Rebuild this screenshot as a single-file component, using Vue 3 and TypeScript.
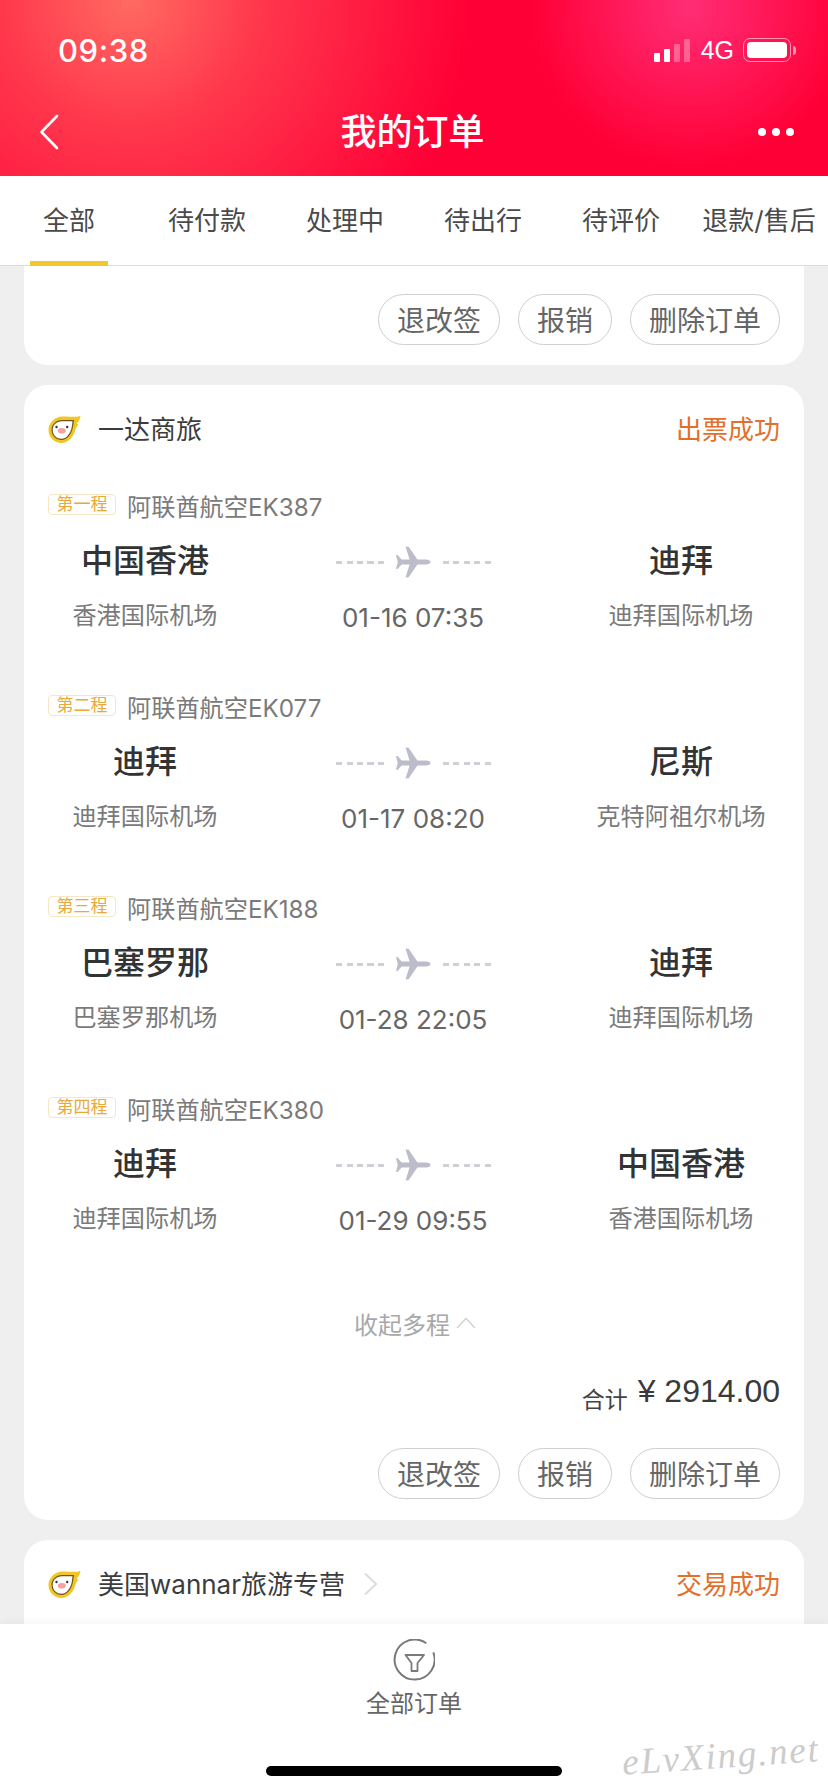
<script setup lang="ts">
interface Leg { tag: string; flight: string; from: string; fromPort: string; to: string; toPort: string; time: string }
const tabs: string[] = ['全部', '待付款', '处理中', '待出行', '待评价', '退款/售后']
const actions: string[] = ['退改签', '报销', '删除订单']
const legs: Leg[] = [
  { tag: '第一程', flight: '阿联酋航空EK387', from: '中国香港', fromPort: '香港国际机场', to: '迪拜', toPort: '迪拜国际机场', time: '01-16 07:35' },
  { tag: '第二程', flight: '阿联酋航空EK077', from: '迪拜', fromPort: '迪拜国际机场', to: '尼斯', toPort: '克特阿祖尔机场', time: '01-17 08:20' },
  { tag: '第三程', flight: '阿联酋航空EK188', from: '巴塞罗那', fromPort: '巴塞罗那机场', to: '迪拜', toPort: '迪拜国际机场', time: '01-28 22:05' },
  { tag: '第四程', flight: '阿联酋航空EK380', from: '迪拜', fromPort: '迪拜国际机场', to: '中国香港', toPort: '香港国际机场', time: '01-29 09:55' },
]
</script>

<template>
  <div class="app">
    <header class="hero">
      <div class="status">
        <span class="clock">09:38</span>
        <div class="status-right">
          <div class="signal"><i class="b1"></i><i class="b2"></i><i class="b3"></i><i class="b4"></i></div>
          <span class="net">4G</span>
          <div class="battery"><div class="battery-fill"></div></div>
          <div class="battery-nub"></div>
        </div>
      </div>
      <div class="nav">
        <svg class="back" width="20" height="36" viewBox="0 0 20 36"><path d="M18 2 2.500 18 18 34" fill="none" stroke="#fff" stroke-width="2.600" stroke-linecap="round" stroke-linejoin="round"/></svg>
        <h1 class="title">我的订单</h1>
        <div class="more"><i></i><i></i><i></i></div>
      </div>
    </header>

    <nav class="tabs">
      <div v-for="(t, i) in tabs" :key="t" class="tab" :class="{ active: i === 0 }">{{ t }}</div>
    </nav>

    <main class="list">
      <section class="card stub">
        <div class="actions">
          <button v-for="a in actions" :key="a" class="btn">{{ a }}</button>
        </div>
      </section>

      <section class="card">
        <div class="card-head">
          <svg class="logo" width="33" height="28" viewBox="0 0 32 28">
            <path d="M32 1C27 2.500 22 1.500 14 1.500 6 1.500 0 8 0 15c0 7.500 6 13 13 13 7 0 12.500-7 14-13.500.5-2 2-4 3-5L28 9c2-2 3.500-5 4-8Z" fill="#f2c522"/>
            <path d="M25.500 5H13.500C7.500 5 3 9.500 3 15c0 5.500 4.500 10 10 10 5.500 0 9.500-5.500 11-11 .8-3 1-6 1.500-9Z" fill="#6a5420"/>
            <path d="M24 6.200H13.500C8 6.200 4.200 10 4.200 15c0 5 3.800 8.800 8.800 8.800 5 0 8.600-5.300 9.900-10.100.6-2.700.9-5.200 1.100-7.500Z" fill="#fff"/>
            <ellipse cx="13.300" cy="15.700" rx="4" ry="2.800" fill="#f2a2a2"/>
            <circle cx="8" cy="12" r="1.200" fill="#333"/><circle cx="18.700" cy="12" r="1.200" fill="#333"/>
          </svg>
          <span class="shop">一达商旅</span>
          <span class="state">出票成功</span>
        </div>

        <div v-for="leg in legs" :key="leg.tag" class="leg">
          <div class="leg-top">
            <span class="tag">{{ leg.tag }}</span>
            <span class="flight">{{ leg.flight }}</span>
          </div>
          <div class="route">
            <div class="place">
              <div class="city">{{ leg.from }}</div>
              <div class="port">{{ leg.fromPort }}</div>
            </div>
            <div class="mid">
              <div class="track">
                <span class="dash"></span>
                <svg width="35" height="32" viewBox="0 0 36 32"><path d="M35.500 16c0-1.600-2-2.600-5-2.600h-8.500L13 .3 9.800 0l4.200 13.400H5.800L1.600 8.800 0 9l1.800 7L0 23l1.600.2 4.200-4.600H14L9.800 32l3.200-.3 9-13.100h8.500c3 0 5-1 5-2.600Z" fill="#bcbcca"/></svg>
                <span class="dash"></span>
              </div>
              <div class="time">{{ leg.time }}</div>
            </div>
            <div class="place">
              <div class="city">{{ leg.to }}</div>
              <div class="port">{{ leg.toPort }}</div>
            </div>
          </div>
        </div>

        <div class="collapse">
          <span>收起多程</span>
          <svg width="20" height="12" viewBox="0 0 20 12"><path d="M1 11 10 1.500 19 11" fill="none" stroke="#d4d4d4" stroke-width="1.600"/></svg>
        </div>
        <div class="total">
          <span class="total-label">合计</span>
          <span class="total-price">¥ 2914.00</span>
        </div>
        <div class="actions spaced">
          <button v-for="a in actions" :key="a" class="btn">{{ a }}</button>
        </div>
      </section>

      <section class="card tail">
        <div class="card-head">
          <svg class="logo" width="33" height="28" viewBox="0 0 32 28">
            <path d="M32 1C27 2.500 22 1.500 14 1.500 6 1.500 0 8 0 15c0 7.500 6 13 13 13 7 0 12.500-7 14-13.500.5-2 2-4 3-5L28 9c2-2 3.500-5 4-8Z" fill="#f2c522"/>
            <path d="M25.500 5H13.500C7.500 5 3 9.500 3 15c0 5.500 4.500 10 10 10 5.500 0 9.500-5.500 11-11 .8-3 1-6 1.500-9Z" fill="#6a5420"/>
            <path d="M24 6.200H13.500C8 6.200 4.200 10 4.200 15c0 5 3.800 8.800 8.800 8.800 5 0 8.600-5.300 9.900-10.100.6-2.700.9-5.200 1.100-7.500Z" fill="#fff"/>
            <ellipse cx="13.300" cy="15.700" rx="4" ry="2.800" fill="#f2a2a2"/>
            <circle cx="8" cy="12" r="1.200" fill="#333"/><circle cx="18.700" cy="12" r="1.200" fill="#333"/>
          </svg>
          <span class="shop">美国wannar旅游专营</span>
          <svg class="chev" width="15" height="24" viewBox="0 0 15 24"><path d="M2 1.500 13 12 2 22.500" fill="none" stroke="#dcdcdc" stroke-width="2"/></svg>
          <span class="state">交易成功</span>
        </div>
      </section>
    </main>

    <footer class="bottom">
      <svg width="42" height="42" viewBox="0 0 42 42">
        <path d="M33.300 4.300A20 20 0 1 0 40.300 13.300" fill="none" stroke="#7a7a7a" stroke-width="2"/>
        <path d="M12.500 16H31L24.500 24v8h-6v-8Z" fill="none" stroke="#7a7a7a" stroke-width="1.800" stroke-linejoin="round"/>
      </svg>
      <div class="bottom-label">全部订单</div>
      <div class="home"></div>
      <div class="watermark">eLvXing.net</div>
    </footer>
  </div>
</template>

<style scoped>
.app {
  width: 828px;
  height: 1792px;
  display: flex;
  flex-direction: column;
  overflow: hidden;
  background: #efefef;
  font-family: Inter, "Noto Sans CJK SC", sans-serif;
  color: #333;
}
.hero {
  height: 176px;
  flex: none;
  color: #fff;
  background:
    radial-gradient(circle at 130px 0, rgba(255, 125, 105, .85) 0, rgba(255, 100, 95, .55) 130px, rgba(255, 0, 54, 0) 340px),
    radial-gradient(circle at 690px 8px, rgba(255, 50, 125, .9) 0, rgba(255, 0, 54, 0) 160px),
    #ff0036;
}
.status {
  height: 100px;
  display: flex;
  align-items: center;
  justify-content: space-between;
  padding: 0 32px 0 58px;
}
.clock { font: 500 31px/1 Inter, sans-serif; letter-spacing: .6px; }
.status-right { display: flex; align-items: center; }
.signal { display: flex; align-items: flex-end; gap: 4px; height: 23px; margin-right: 11px; }
.signal i { width: 6px; border-radius: 1px; background: #fff; display: block; }
.signal .b1 { height: 9px; }
.signal .b2 { height: 13px; }
.signal .b3 { height: 18px; background: rgba(255, 255, 255, .3); }
.signal .b4 { height: 23px; background: rgba(255, 255, 255, .3); }
.net { font: 400 25px/1 "Liberation Sans", sans-serif; margin-right: 9px; }
.battery {
  width: 48px;
  height: 24px;
  box-sizing: border-box;
  padding: 3px;
  border: 1.500px solid rgba(255, 255, 255, .55);
  border-radius: 7px;
}
.battery-fill { height: 100%; background: #fff; border-radius: 4px; }
.battery-nub { width: 3px; height: 9px; margin-left: 2px; background: rgba(255, 255, 255, .55); border-radius: 0 3px 3px 0; }
.nav {
  height: 64px;
  display: flex;
  align-items: center;
  justify-content: space-between;
  padding: 0 34px 0 39px;
  position: relative;
}
.title {
  margin: 0;
  flex: 1;
  text-align: center;
  font-size: 36px;
  font-weight: 500;
  line-height: 64px;
  padding-left: 8px;
}
.more { display: flex; gap: 6px; }
.more i { width: 8px; height: 8px; border-radius: 50%; background: #fff; display: block; }

.tabs {
  height: 90px;
  flex: none;
  box-sizing: border-box;
  display: grid;
  grid-template-columns: repeat(6, 138px);
  background: #fff;
  border-bottom: 1px solid #dcdcdc;
}
.tab {
  position: relative;
  text-align: center;
  font-size: 26px;
  line-height: 90px;
  color: #4a4a4a;
  white-space: nowrap;
}
.tab.active::after {
  content: "";
  position: absolute;
  left: 30px;
  width: 78px;
  bottom: 0;
  height: 5px;
  background: #f2c82c;
}

.list {
  flex: 1;
  min-height: 0;
  overflow: hidden;
  padding: 0 24px;
  display: flex;
  flex-direction: column;
  gap: 20px;
}
.card {
  flex: none;
  background: #fff;
  border-radius: 24px;
  padding: 0 24px;
}
.card.stub {
  border-radius: 0 0 24px 24px;
  padding-top: 28px;
  padding-bottom: 20px;
}
.card.tail { padding-bottom: 120px; }
.actions { display: flex; justify-content: flex-end; gap: 18px; }
.actions.spaced { margin-top: 31px; padding-bottom: 21px; }
.btn {
  height: 51px;
  padding: 3px 18px 0;
  border: 1px solid #cfcfcf;
  border-radius: 26px;
  background: #fff;
  color: #666;
  font-family: inherit;
  font-size: 28px;
  line-height: 1;
}
.card-head { height: 88px; box-sizing: border-box; padding-bottom: 4px; display: flex; align-items: center; }
.logo { flex: none; margin-top: 3px; }
.shop { margin-left: 17px; font-size: 26px; color: #3c3c3c; }
.chev { margin-left: 18px; margin-top: 3px; }
.state { margin-left: auto; font-size: 26px; color: #e2702c; }

.leg { height: 201px; box-sizing: border-box; padding-top: 20px; }
.leg-top { height: 28px; display: flex; align-items: center; }
.tag {
  box-sizing: border-box;
  width: 68px;
  height: 21px;
  margin-right: 11px;
  margin-top: -6px;
  border: 1px solid #f6e6c4;
  border-radius: 4px;
  color: #e9a93a;
  font-size: 17px;
  line-height: 19px;
  text-align: center;
}
.flight { font-size: 24.200px; color: #7a7a7a; line-height: 28px; margin-top: 2px; }
.route {
  display: grid;
  grid-template-columns: 194px 342px 194px;
  margin-top: 18px;
}
.place { display: flex; flex-direction: column; align-items: center; gap: 17px; }
.city { font-size: 32px; font-weight: 500; line-height: 44px; color: #333; white-space: nowrap; }
.port { font-size: 24.200px; line-height: 32px; color: #7a7a7a; white-space: nowrap; }
.mid { display: flex; flex-direction: column; align-items: center; gap: 19px; }
.track { height: 44px; box-sizing: border-box; padding-top: 2px; display: flex; align-items: center; gap: 12px; }
.dash {
  width: 48px;
  height: 3px;
  background: repeating-linear-gradient(90deg, #cfcfd6 0 6px, transparent 6px 10.500px);
}
.time { font-size: 26px; line-height: 32px; color: #666; white-space: nowrap; }

.collapse {
  margin-top: 30px;
  height: 32px;
  display: flex;
  align-items: center;
  justify-content: center;
  gap: 6px;
  font-size: 24px;
  color: #a8a8a8;
  padding-left: 2px;
}
.total {
  margin-top: 34px;
  height: 44px;
  display: flex;
  justify-content: flex-end;
  align-items: baseline;
  gap: 10px;
}
.total-label { font-size: 23px; color: #444; position: relative; top: 6px; }
.total-price { font-family: "Liberation Sans", sans-serif; font-size: 32px; color: #3a3a3a; }

.bottom {
  position: relative;
  z-index: 1;
  flex: none;
  height: 168px;
  background: #fff;
  box-shadow: 0 -3px 8px rgba(0, 0, 0, .04);
  display: flex;
  flex-direction: column;
  align-items: center;
  padding-top: 15px;
  box-sizing: border-box;
}
.bottom-label { margin-top: 6px; font-size: 24px; line-height: 34px; color: #666; }
.home {
  position: absolute;
  left: 266px;
  top: 142px;
  width: 296px;
  height: 10px;
  border-radius: 5px;
  background: #000;
}
.watermark {
  position: absolute;
  right: 8px;
  top: 113px;
  font: italic 400 37px/1 "Liberation Serif", serif;
  letter-spacing: 1.800px;
  color: #cccccc;
  transform: rotate(-4deg);
}
</style>
